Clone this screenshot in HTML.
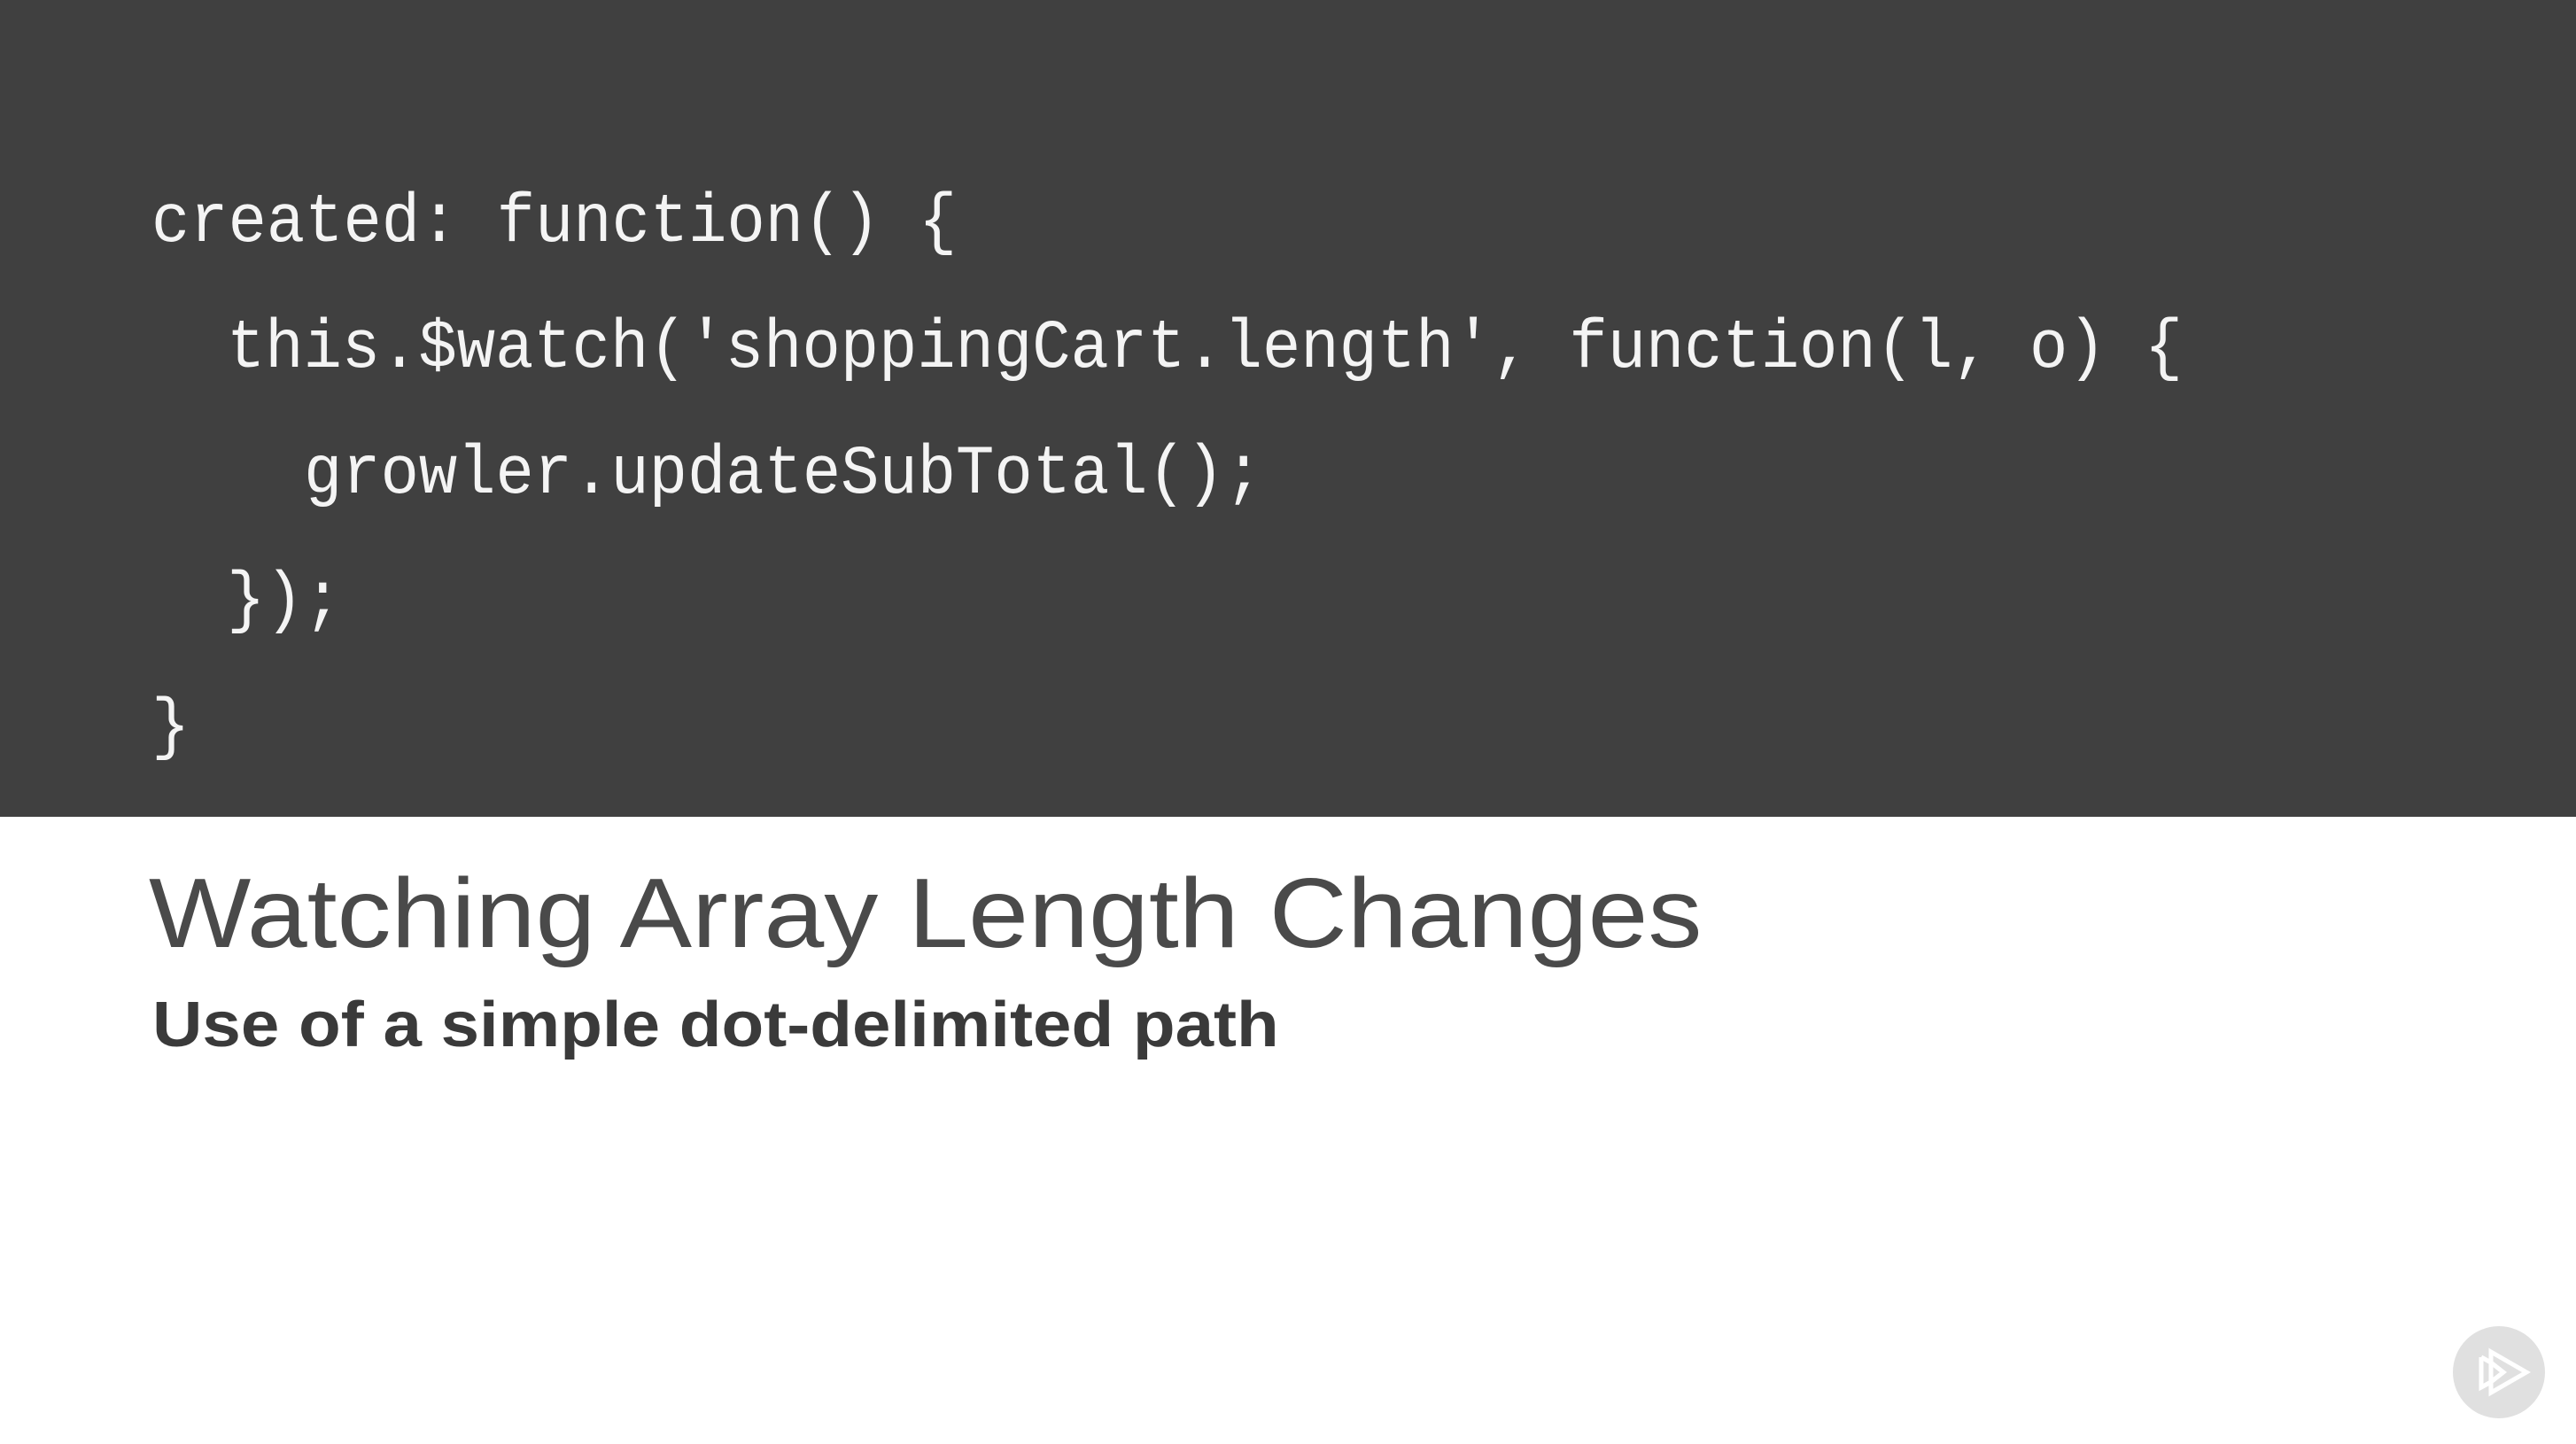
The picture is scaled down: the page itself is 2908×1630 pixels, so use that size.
<!DOCTYPE html>
<html><head><meta charset="utf-8"><style>
html,body{margin:0;padding:0;}
body{width:2908px;height:1630px;position:relative;overflow:hidden;background:#fff;font-family:"Liberation Sans",sans-serif;}
.top{position:absolute;left:0;top:0;width:2908px;height:922px;background:#404040;}
.code{position:absolute;left:171px;font-family:"Liberation Mono",monospace;font-size:78px;color:#f4f4f4;white-space:pre;transform:scaleX(0.925);transform-origin:0 0;line-height:1;}
.t{position:absolute;left:168px;top:976px;font-size:111px;color:#4a4a4a;white-space:nowrap;line-height:1;transform-origin:0 0;transform:scaleX(1.10);}
.s{position:absolute;left:172px;top:1121px;font-size:72px;font-weight:bold;color:#3a3a3a;white-space:nowrap;line-height:1;transform-origin:0 0;transform:scaleX(1.085);}
</style></head><body>
<div class="top">
<div class="code" style="top:213px">created: function() {</div>
<div class="code" style="top:355px;left:256px">this.$watch('shoppingCart.length', function(l, o) {</div>
<div class="code" style="top:497px;left:343px">growler.updateSubTotal();</div>
<div class="code" style="top:640px;left:256px">});</div>
<div class="code" style="top:783px">}</div>
</div>
<div class="t">Watching Array Length Changes</div>
<div class="s">Use of a simple dot-delimited path</div>
<svg style="position:absolute;left:2768px;top:1496px" width="106" height="106" viewBox="0 0 106 106">
<circle cx="53" cy="53" r="52" fill="#e0e0e0"/>
<path d="M33 36 V70 L44 64 M44 42 L33 36 M44 42 V64 L58 53 Z M44 30 V76 L84 53 Z" fill="none" stroke="#fff" stroke-width="5" stroke-linejoin="miter"/>
</svg>
</body></html>
